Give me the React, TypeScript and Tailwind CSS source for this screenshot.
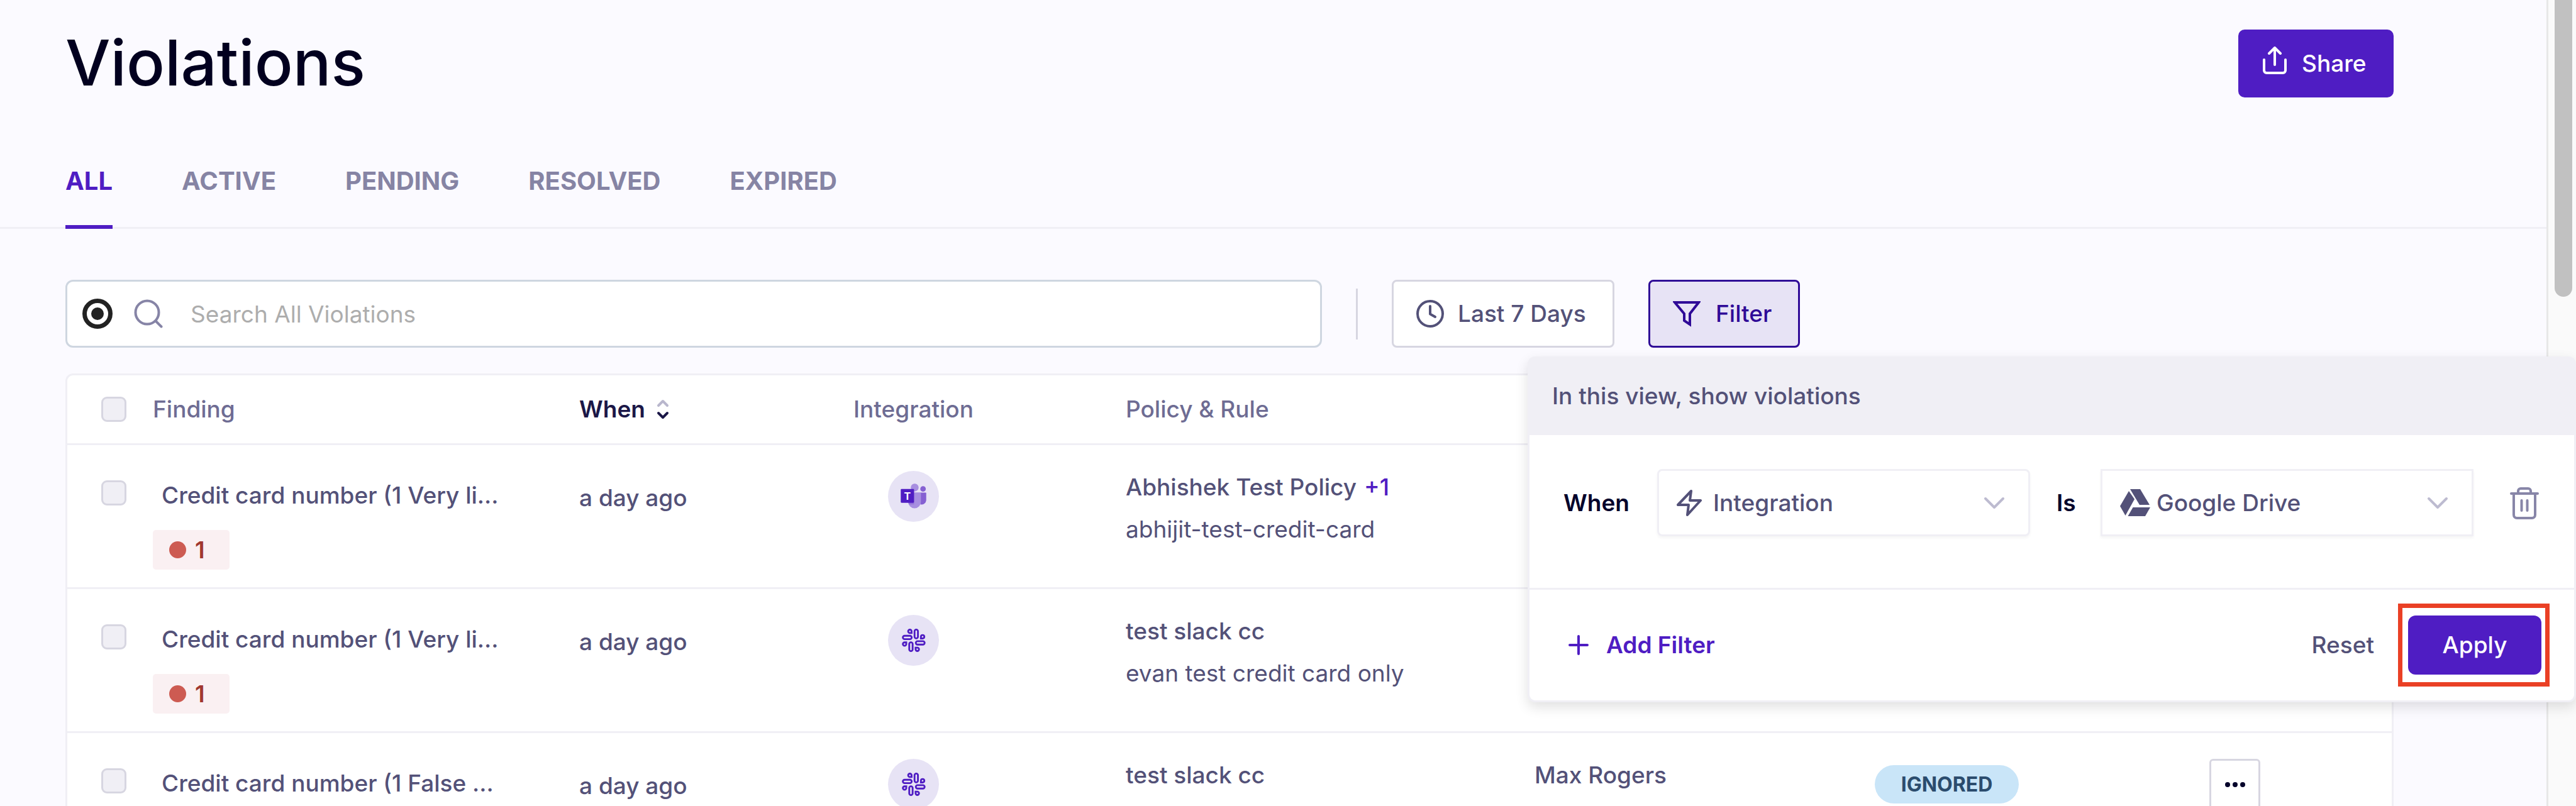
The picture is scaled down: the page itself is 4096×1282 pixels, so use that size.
import type { ReactNode, SVGProps } from "react";

const FONT = "font-['Inter','Liberation_Sans',sans-serif]";

function Stroke({ children, ...rest }: SVGProps<SVGSVGElement> & { children: ReactNode }) {
  return (
    <svg
      fill="none"
      stroke="currentColor"
      strokeWidth={4}
      strokeLinecap="round"
      strokeLinejoin="round"
      aria-hidden="true"
      {...rest}
    >
      {children}
    </svg>
  );
}

const ShareIcon = () => (
  <Stroke viewBox="0 0 38 44" className="mb-[10px] h-11 w-[38px] shrink-0">
    <path d="M2 21V38a4 4 0 0 0 4 4H32a4 4 0 0 0 4-4V21" />
    <path d="M19 29V3M10 11L19 2l9 9" />
  </Stroke>
);

const SearchIcon = () => (
  <Stroke viewBox="0 0 46 46" className="h-[46px] w-[46px] shrink-0 text-[#8684a6]">
    <circle cx="21" cy="21" r="18.5" />
    <path d="M34.5 34.5L43.5 43.5" />
  </Stroke>
);

const ClockIcon = () => (
  <Stroke viewBox="0 0 44 44" className="h-11 w-11 shrink-0">
    <circle cx="22" cy="22" r="20" />
    <path d="M22 10V22.5L30 27" />
  </Stroke>
);

const FunnelIcon = () => (
  <Stroke viewBox="0 0 44 42" strokeLinejoin="miter" className="h-[42px] w-11 shrink-0">
    <path d="M3 3H41L27 21V38L18 32V21Z" />
  </Stroke>
);

const BoltIcon = () => (
  <Stroke viewBox="0 0 40 44" strokeWidth={4} className="h-11 w-10">
    <path d="M23 3L2 25H19L17 41L38 18H21Z" />
  </Stroke>
);

const DriveIcon = () => (
  <svg viewBox="0 0 48 43" fill="currentColor" aria-hidden="true" className="h-[43px] w-12">
    <path d="M14 3L23 16L8.500 42L0 27Z" />
    <path d="M16 0H32L47 25H31Z" />
    <path d="M20.500 29H48L40 43H12.500Z" />
  </svg>
);

const ChevronIcon = () => (
  <Stroke viewBox="0 0 34 20" className="h-5 w-[34px] text-[#bdbbd0]">
    <path d="M3 3L17 17L31 3" />
  </Stroke>
);

const TrashIcon = () => (
  <Stroke viewBox="0 0 46 52" className="h-[52px] w-[46px]">
    <path d="M2 11H44M13 10V7a4 4 0 0 1 4-4H29a4 4 0 0 1 4 4V10" />
    <path d="M6 12V45a5 5 0 0 0 5 5H35a5 5 0 0 0 5-5V12M18.500 22V38M27.500 22V38" />
  </Stroke>
);

const PlusIcon = () => (
  <Stroke viewBox="0 0 32 32" className="h-8 w-8">
    <path d="M16 2V30M2 16H30" />
  </Stroke>
);

const SortIcon = () => (
  <Stroke viewBox="0 0 20 32" className="h-8 w-5">
    <path d="M3 10L10 3L17 10" className="text-[#b9b7cd]" stroke="currentColor" />
    <path d="M3 22L10 29L17 22" />
  </Stroke>
);

const TeamsLogo = () => (
  <svg viewBox="0 0 96 96" role="img" aria-label="Microsoft Teams" className="h-full w-full">
    <circle cx="66" cy="34" r="5.2" fill="#8560d2" />
    <path d="M61 41H71Q72 41 72 42V55.500A8.500 8.500 0 0 1 61 63Z" fill="#8560d2" />
    <circle cx="50.300" cy="31.300" r="7.400" fill="#a78ee0" />
    <path d="M38 40.500H61Q62 40.500 62 41.500V58.500A12 12 0 0 1 38 58.500Z" fill="#a78ee0" />
    <path d="M44 34H49V63H40L38 60V56H44Z" fill="#8560d2" fillOpacity="0.6" />
    <rect x="24" y="34" width="25" height="26" rx="1.500" fill="#4f1dc3" />
    <text x="36.500" y="54" fontSize="19" fontWeight="700" textAnchor="middle" fill="#fff">
      T
    </text>
  </svg>
);

const SlackLogo = () => (
  <svg
    viewBox="0 0 96 96"
    role="img"
    aria-label="Slack"
    fill="none"
    stroke="#4f1dc3"
    strokeWidth="3.400"
    className="h-full w-full"
  >
    <rect x="50" y="27.700" width="6.400" height="16.600" rx="3.200" />
    <rect x="28" y="39.400" width="16.600" height="6.400" rx="3.200" />
    <rect x="40" y="51.700" width="6.400" height="16.600" rx="3.200" />
    <rect x="52.400" y="49.600" width="16.600" height="6.400" rx="3.200" />
    <path d="M44.400 34.200V31a3.200 3.200 0 1 0-3.200 3.200Z" />
    <path d="M62 44.400V41a3.200 3.200 0 1 1 3.200 3.400Z" />
    <path d="M34.400 51.800V55a3.200 3.200 0 1 1-3.200-3.200Z" />
    <path d="M52 61.800V65a3.200 3.200 0 1 0 3.200-3.200Z" />
  </svg>
);

const MoreIcon = () => (
  <svg viewBox="0 0 32 8" fill="currentColor" aria-hidden="true" className="h-2 w-8">
    <circle cx="4" cy="4" r="4" />
    <circle cx="16" cy="4" r="4" />
    <circle cx="28" cy="4" r="4" />
  </svg>
);

const tabs = ["ALL", "ACTIVE", "PENDING", "RESOLVED", "EXPIRED"];

type Row = {
  finding: string;
  count?: string;
  when: string;
  source: "teams" | "slack";
  policy: string;
  extra?: string;
  rule?: string;
  person?: string;
  status?: string;
};

const rows: Row[] = [
  {
    finding: "Credit card number (1 Very li...",
    count: "1",
    when: "a day ago",
    source: "teams",
    policy: "Abhishek Test Policy",
    extra: "+1",
    rule: "abhijit-test-credit-card",
  },
  {
    finding: "Credit card number (1 Very li...",
    count: "1",
    when: "a day ago",
    source: "slack",
    policy: "test slack cc",
    rule: "evan test credit card only",
  },
  {
    finding: "Credit card number (1 False ...",
    when: "a day ago",
    source: "slack",
    policy: "test slack cc",
    person: "Max Rogers",
    status: "IGNORED",
  },
];

function Checkbox({ label }: { label: string }) {
  return (
    <input
      type="checkbox"
      aria-label={label}
      className="block h-10 w-10 appearance-none rounded-[9px] border-[3px] border-[#d7d6e1] bg-[#f0eff5]"
    />
  );
}

function FilterSelect({
  label,
  value,
  icon,
  className,
}: {
  label: string;
  value: string;
  icon: ReactNode;
  className: string;
}) {
  return (
    <div className="relative w-[593px]">
      <span className="pointer-events-none absolute inset-y-0 left-[31px] flex items-center">{icon}</span>
      <select
        aria-label={label}
        className={`block h-[107px] w-full appearance-none border-[3px] border-[#f0eff5] bg-transparent pl-[86px] shadow-[0_3px_4px_rgba(0,0,0,0.04)] ${className}`}
      >
        <option>{value}</option>
      </select>
      <span className="pointer-events-none absolute inset-y-0 right-10 flex items-center">
        <ChevronIcon />
      </span>
    </div>
  );
}

function FilterPanel() {
  return (
    <div
      role="dialog"
      aria-label="Filter violations"
      className="absolute top-full -left-[192px] z-20 mt-[14px] w-[1667px] rounded-[12px] border-[3px] border-[#f0eff5] bg-white font-medium text-[#535178] shadow-[0_8px_20px_rgba(0,0,0,0.12)]"
    >
      <p className="bg-[#f0eff5] px-9 pt-9 pb-[38px] leading-12">In this view, show violations</p>
      <div className="flex items-center px-[54px] pt-[54px] pb-[82px]">
        <span className="w-[149px] font-semibold text-[#05032b]">When</span>
        <FilterSelect label="When" value="Integration" icon={<BoltIcon />} className="rounded-[8px]" />
        <span className="w-[112px] pl-[42px] font-semibold text-[#05032b]">Is</span>
        <FilterSelect label="Is" value="Google Drive" icon={<DriveIcon />} className="rounded-none" />
        <button type="button" aria-label="Remove filter" className="ml-[58px] text-[#8886a8]">
          <TrashIcon />
        </button>
      </div>
      <div className="flex items-center border-t-[3px] border-[#f0eff5] py-[22px] pr-[39px] pl-[62px]">
        <button type="button" className="flex items-center gap-7 font-semibold text-[#4f1dc3]">
          <PlusIcon />
          Add Filter
        </button>
        <button type="button" className="mr-[38px] ml-auto">
          Reset
        </button>
        <div className="border-[7px] border-[#ea4025] py-3 pr-[6px] pl-[9px]">
          <button type="button" className="block h-[94px] w-[212px] rounded-[12px] bg-[#4f1dc3] text-white">
            Apply
          </button>
        </div>
      </div>
    </div>
  );
}

function ViolationRow({ row }: { row: Row }) {
  return (
    <tr className="h-[229px] align-top">
      <td className="border-b-[3px] border-[#f0eff5] pt-14 pl-[54px]">
        <Checkbox label={`Select ${row.finding}`} />
      </td>
      <td className="border-b-[3px] border-[#f0eff5] pt-14">
        <p className="pl-[14px] font-medium">{row.finding}</p>
        {row.count && (
          <span className="mt-[31px] flex h-[63px] w-[122px] items-center gap-[14px] rounded-[5px] bg-[#faf0f2] pl-[26px] font-semibold text-[#a0372f]">
            <span className="h-[27px] w-[27px] rounded-full bg-[#cd5b52]" />
            {row.count}
          </span>
        )}
      </td>
      <td className="border-b-[3px] border-[#f0eff5] pt-[60px] font-medium">{row.when}</td>
      <td className="border-b-[3px] border-[#f0eff5] pt-[41px]">
        <span className="mx-auto block h-[81px] w-[81px] rounded-full bg-[#e7e3f5]">
          {row.source === "teams" ? <TeamsLogo /> : <SlackLogo />}
        </span>
      </td>
      <td className="border-b-[3px] border-[#f0eff5] pt-[43px]">
        <p className="font-medium">
          {row.policy}
          {row.extra && (
            <a href="#policies" className="ml-3 text-[#4f1dc3]">
              {row.extra}
            </a>
          )}
        </p>
        {row.rule && <p className="mt-[19px]">{row.rule}</p>}
      </td>
      <td className="border-b-[3px] border-[#f0eff5] pt-[43px] font-medium">{row.person}</td>
      <td className="border-b-[3px] border-[#f0eff5] pt-[51px]">
        {row.status && (
          <span className="flex h-[61px] w-[229px] items-center justify-center rounded-full bg-[#c9e5f8] text-[32px] font-bold text-[#2b4c6d]">
            {row.status}
          </span>
        )}
      </td>
      <td className="border-b-[3px] border-[#f0eff5] pt-[41px]">
        {row.status && (
          <button
            type="button"
            aria-label="More actions"
            className="flex h-[81px] w-[81px] items-center justify-center rounded-[6px] border-[3px] border-[#d7d6e1] bg-white text-[#05032b]"
          >
            <MoreIcon />
          </button>
        )}
      </td>
    </tr>
  );
}

export default function App() {
  return (
    <div className={`flex h-screen overflow-hidden bg-[#fbfaff] text-[37px] leading-12 text-[#535178] ${FONT}`}>
      <main className="min-w-0 flex-1">
        <header className="flex items-start justify-between pt-[47px] pr-[243px] pl-[104px]">
          <h1 className="text-[101px] leading-26 font-medium text-[#02001f]">Violations</h1>
          <button
            type="button"
            className="flex h-[108px] w-[247px] items-center gap-6 rounded-[10px] bg-[#4f1dc3] pl-[39px] font-medium text-white"
          >
            <ShareIcon />
            Share
          </button>
        </header>

        <nav
          aria-label="Violation status"
          className="mt-[109px] flex gap-[110px] border-b-[3px] border-[#f0eff5] pl-[104px] text-[40px] leading-12"
        >
          {tabs.map((tab, i) => (
            <a
              key={tab}
              href={`#${tab.toLowerCase()}`}
              className={`-mb-[3px] border-b-[6px] pb-[46px] font-bold ${
                i === 0 ? "border-[#4f1dc3] text-[#4f1dc3]" : "border-transparent text-[#8684a4]"
              }`}
            >
              {tab}
            </a>
          ))}
        </nav>

        <div className="mt-[81px] flex items-center pl-[104px]">
          <div className="flex h-[108px] w-[1998px] items-center rounded-[12px] border-[3px] border-[#ced6e0] bg-white pl-6">
            <input
              type="radio"
              aria-label="Search scope"
              defaultChecked
              className="flex h-12 w-12 shrink-0 appearance-none items-center justify-center rounded-full border-[7px] border-[#222222] before:h-5 before:w-5 before:rounded-full before:bg-[#222222]"
            />
            <span className="ml-[34px]">
              <SearchIcon />
            </span>
            <input
              type="text"
              aria-label="Search violations"
              placeholder="Search All Violations"
              className="ml-11 h-full min-w-0 flex-1 bg-transparent outline-none placeholder:text-[#adadad]"
            />
          </div>
          <div className="mx-[54px] h-[81px] w-[3px] bg-[#d7d6e1]" />
          <button
            type="button"
            className="flex h-[108px] w-[354px] items-center gap-[22px] rounded-[8px] border-[3px] border-[#d7d6e1] bg-white pl-9 font-medium whitespace-nowrap"
          >
            <ClockIcon />
            Last 7 Days
          </button>
          <div className="relative ml-[54px]">
            <button
              type="button"
              aria-expanded="true"
              className="flex h-[108px] w-[241px] items-center gap-6 rounded-[8px] border-[3px] border-[#2f0a97] bg-[#e7e3f5] pl-9 font-medium text-[#2f0a97]"
            >
              <FunnelIcon />
              Filter
            </button>
            <FilterPanel />
          </div>
        </div>

        <div className="mt-[41px] mr-[243px] ml-[104px] rounded-[12px] border-[3px] border-[#f0eff5] bg-white">
          <table className="w-full table-fixed border-separate border-spacing-0">
            <colgroup>
              <col className="w-[136px]" />
              <col className="w-[678px]" />
              <col className="w-[194px]" />
              <col className="w-[675px]" />
              <col className="w-[650px]" />
              <col className="w-[541px]" />
              <col className="w-[532px]" />
              <col />
            </colgroup>
            <thead>
              <tr className="h-[111px] text-left text-[#6e6c93]">
                <th className="border-b-[3px] border-[#f0eff5] pl-[54px]">
                  <Checkbox label="Select all violations" />
                </th>
                <th className="border-b-[3px] border-[#f0eff5] font-medium">Finding</th>
                <th className="border-b-[3px] border-[#f0eff5] font-semibold text-[#1b1747]">
                  <button type="button" className="flex items-center gap-[18px]">
                    When
                    <SortIcon />
                  </button>
                </th>
                <th className="border-b-[3px] border-[#f0eff5] text-center font-medium">Integration</th>
                <th className="border-b-[3px] border-[#f0eff5] font-medium">Policy &amp; Rule</th>
                <td className="border-b-[3px] border-[#f0eff5]" />
                <td className="border-b-[3px] border-[#f0eff5]" />
                <td className="border-b-[3px] border-[#f0eff5]" />
              </tr>
            </thead>
            <tbody>
              {rows.map((row, i) => (
                <ViolationRow key={i} row={row} />
              ))}
            </tbody>
          </table>
        </div>
      </main>

      <div aria-hidden="true" className="w-[47px] shrink-0 border-l-[3px] border-[#e8e8e8] bg-[#fafafa] pl-[10px]">
        <div className="h-[472px] w-7 rounded-b-full bg-[#c1c1c1]" />
      </div>
    </div>
  );
}
